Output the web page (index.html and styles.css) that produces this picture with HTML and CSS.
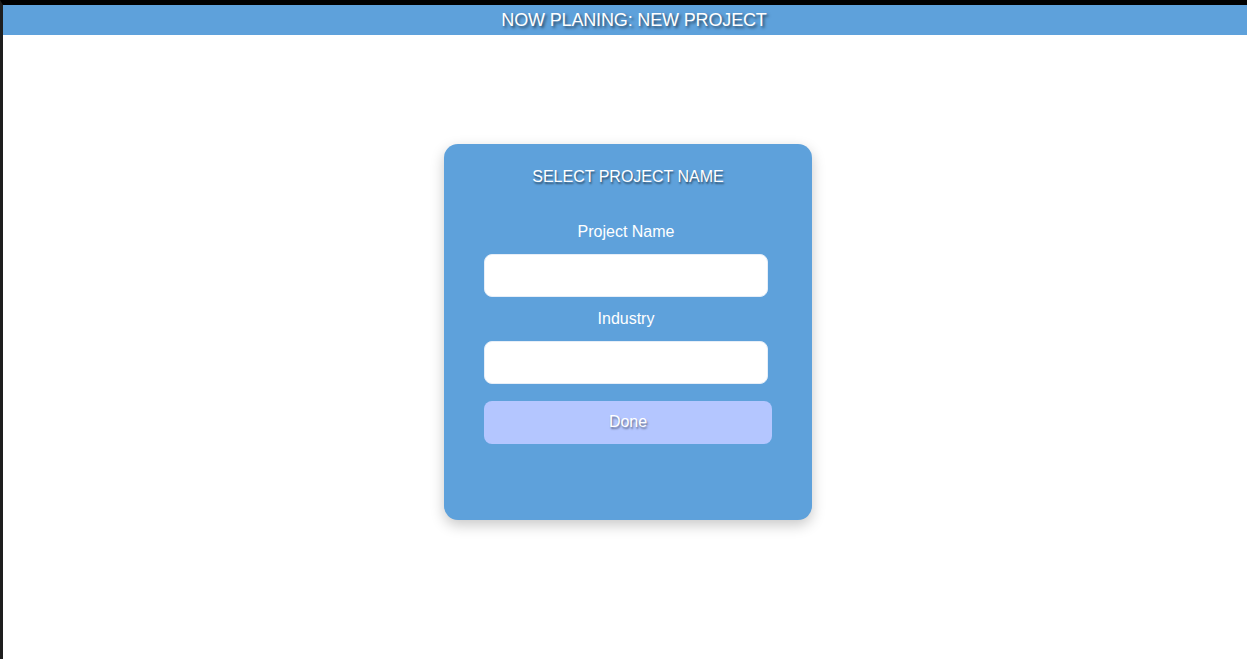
FILE: index.html
```html
<!DOCTYPE html>
<html>
<head>
<meta charset="utf-8">
<link rel="stylesheet" href="styles.css">
</head>
<body>
<div class="frame">
  <header class="topbar">NOW PLANING: NEW PROJECT</header>
  <main class="main">
    <form class="card">
      <h2 class="card-title">SELECT PROJECT NAME</h2>
      <label class="field-label first" for="pname">Project Name</label>
      <input class="field-input" id="pname" type="text">
      <label class="field-label second" for="industry">Industry</label>
      <input class="field-input" id="industry" type="text">
      <button class="done-btn" type="button">Done</button>
    </form>
  </main>
</div>
</body>
</html>
```
FILE: styles.css
```css
html, body {
  margin: 0;
  padding: 0;
  background: #ffffff;
}
body {
  font-family: "Liberation Sans", Arial, sans-serif;
}
.frame {
  border-top: 5px solid #000000;
  border-left: 3px solid #1e1e1e;
  min-height: 100vh;
  box-sizing: border-box;
}
.topbar {
  height: 30px;
  line-height: 30px;
  background: #5ea1db;
  color: #ffffff;
  font-size: 18px;
  letter-spacing: -0.15px;
  text-align: center;
  padding-left: 18px;
  text-shadow: 2px 2px 3px rgba(0, 0, 0, 0.55);
}
.main {
  display: flex;
  justify-content: center;
  padding-left: 6px;
  padding-top: 109px;
}
.card {
  width: 368px;
  height: 376px;
  box-sizing: border-box;
  background: #5ea1db;
  border-radius: 14px;
  box-shadow: 0 5px 14px rgba(0, 0, 0, 0.22);
  padding: 23px 40px 22px;
  display: flex;
  flex-direction: column;
  align-items: flex-start;
}
.card-title {
  margin: 0 0 35px 0;
  align-self: center;
  font-size: 16px;
  font-weight: normal;
  line-height: 20px;
  color: #ffffff;
  text-shadow: 1px 2px 2px rgba(0, 0, 0, 0.5);
}
.field-label {
  align-self: center;
  margin-left: -4px;
  font-size: 16px;
  line-height: 20px;
  color: #ffffff;
}
.first {
  margin-bottom: 12px;
}
.second {
  margin-top: 12px;
  margin-bottom: 12px;
}
.field-input {
  width: 284px;
  height: 43px;
  box-sizing: border-box;
  border: 1px solid #e6eef8;
  border-radius: 8px;
  background: #ffffff;
  margin: 0;
  padding: 0 10px;
  font-size: 16px;
  font-family: inherit;
  outline: none;
}
.done-btn {
  margin-top: 17px;
  width: 288px;
  height: 43px;
  padding: 0 0 2px;
  border: none;
  border-radius: 8px;
  background: #b4c6ff;
  color: #ffffff;
  font-family: inherit;
  font-size: 16px;
  text-shadow: 1px 2px 2px rgba(0, 0, 0, 0.45);
  cursor: pointer;
}
```
